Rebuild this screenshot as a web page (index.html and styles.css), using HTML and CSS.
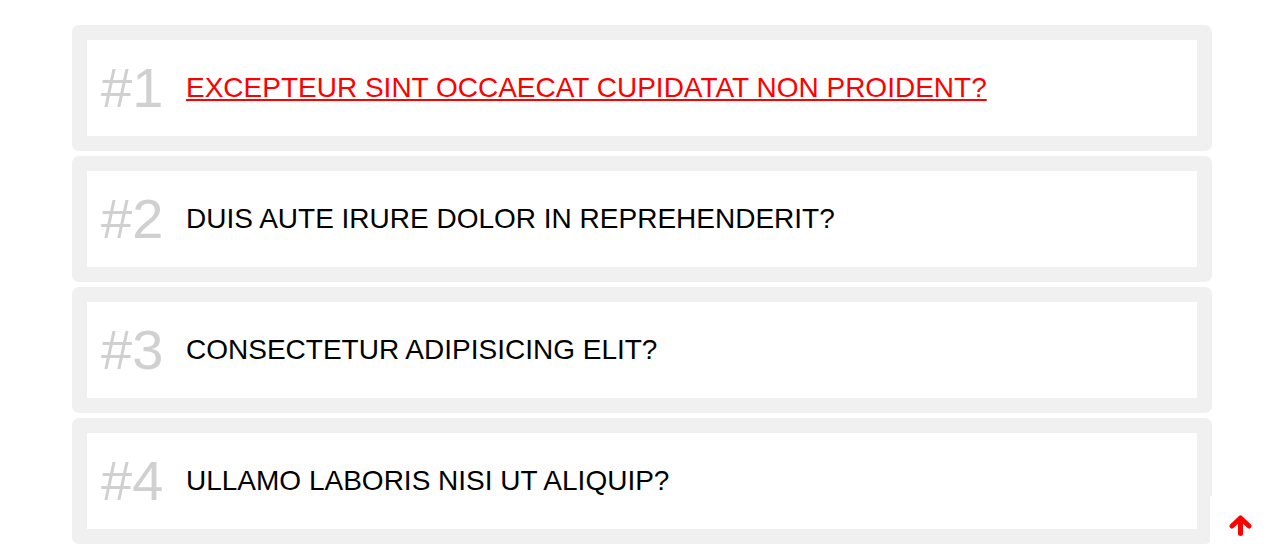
FILE: index.html
```html
<!DOCTYPE html>
<html lang="en">
<head>
<meta charset="utf-8">
<title>FAQ</title>
<link rel="stylesheet" href="styles.css">
</head>
<body>
<main class="faq">
  <div class="card">
    <div class="card-inner">
      <span class="num">#1</span>
      <a class="title active" href="#">EXCEPTEUR SINT OCCAECAT CUPIDATAT NON PROIDENT?</a>
    </div>
  </div>
  <div class="card">
    <div class="card-inner">
      <span class="num">#2</span>
      <a class="title" href="#">DUIS AUTE IRURE DOLOR IN REPREHENDERIT?</a>
    </div>
  </div>
  <div class="card">
    <div class="card-inner">
      <span class="num">#3</span>
      <a class="title" href="#">CONSECTETUR ADIPISICING ELIT?</a>
    </div>
  </div>
  <div class="card">
    <div class="card-inner">
      <span class="num">#4</span>
      <a class="title" href="#">ULLAMO LABORIS NISI UT ALIQUIP?</a>
    </div>
  </div>
</main>
<a class="to-top" href="#">
  <svg width="23" height="21" viewBox="0 0 23 21" aria-hidden="true">
    <polyline points="3,11 11.5,3 20,11" fill="none" stroke="#ff0000" stroke-width="5" stroke-linecap="round" stroke-linejoin="round"/>
    <line x1="11.5" y1="4" x2="11.5" y2="18.5" stroke="#ff0000" stroke-width="5" stroke-linecap="round"/>
  </svg>
</a>
</body>
</html>
```
FILE: styles.css
```css
html, body {
  margin: 0;
  padding: 0;
  background: #ffffff;
  font-family: "Liberation Sans", Arial, sans-serif;
}

.faq {
  width: 1140px;
  margin: 0 0 0 72px;
  padding-top: 25px;
  display: flex;
  flex-direction: column;
  gap: 5px;
}

.card {
  background: #f0f0f0;
  border-radius: 7px;
  padding: 15px;
}

.card-inner {
  background: #ffffff;
  height: 96px;
  display: flex;
  align-items: center;
  padding-left: 14px;
}

.num {
  font-size: 56px;
  color: #d0d0d0;
  width: 85px;
  flex: none;
  line-height: 1;
}

.title {
  font-size: 28px;
  color: #000000;
  text-decoration: none;
  line-height: 1;
}

.title.active {
  color: #ff0000;
  text-decoration: underline;
}

.to-top {
  position: fixed;
  right: 15px;
  bottom: 0;
  width: 60px;
  height: 50px;
  box-sizing: border-box;
  padding-top: 19px;
  background: #ffffff;
  display: flex;
  align-items: flex-start;
  justify-content: center;
}
```
